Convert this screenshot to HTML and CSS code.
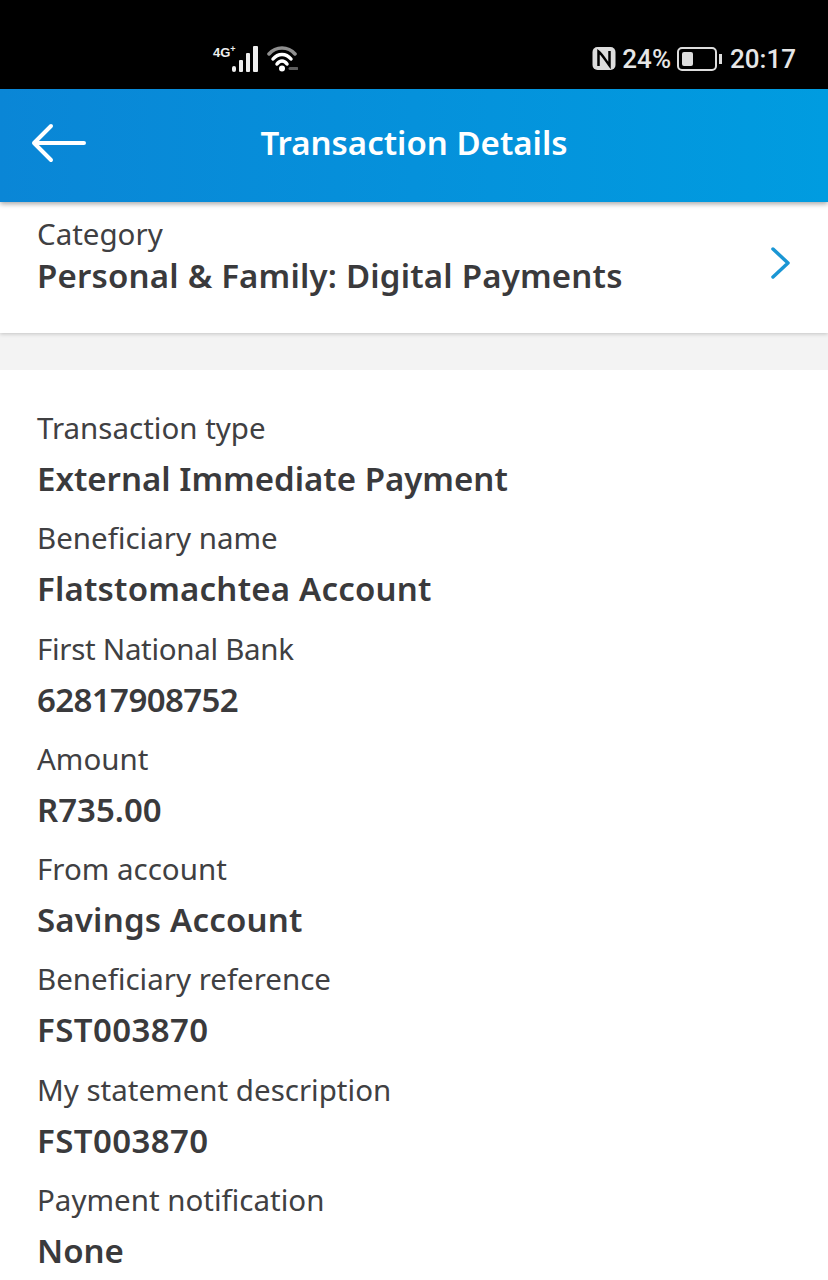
FILE: index.html
```html
<!DOCTYPE html>
<html lang="en">
<head>
<meta charset="utf-8">
<title>Transaction Details</title>
<link rel="stylesheet" href="styles.css">
</head>
<body>
<div class="status">
  <div class="status-left">
    <span class="net">4G<sup>+</sup></span>
    <svg class="signal" width="26" height="26" viewBox="0 0 26 26"><rect x="0" y="20" width="4" height="6" rx="2"/><rect x="7" y="14" width="4" height="12" rx="1"/><rect x="14" y="7" width="4" height="19" rx="1"/><rect x="21" y="0" width="5" height="26" rx="1"/></svg>
    <svg class="wifi" width="31" height="26" viewBox="0 0 31 26" fill="none" stroke-linecap="round"><path d="M2 8C9 0 21 0 28 8" stroke="#8f8f8f" stroke-width="3.500"/><path d="M6 13C11 7 19 7 24 13" stroke="#fff" stroke-width="3.500"/><path d="M10 18C13 14 17 14 20 18" stroke="#fff" stroke-width="3.500"/><circle cx="15" cy="22.500" r="3" fill="#fff"/><path d="M23 22.500h7" stroke="#5c5c5c" stroke-width="3"/></svg>
  </div>
  <div class="status-right">
    <svg class="nfc" width="24" height="23" viewBox="0 0 24 23"><rect x="0.500" y="0" width="23" height="23" rx="5" fill="#ddd"/><path d="M6.500 19V4.500C10 7 14 14 17.500 18.500V4" fill="none" stroke="#000" stroke-width="2.500"/></svg>
    <span class="pct">24%</span>
    <span class="battery"><span class="battery-fill"></span></span>
    <span class="battery-tip"></span>
    <span class="clock">20:17</span>
  </div>
</div>
<header class="appbar">
  <svg class="back" width="56" height="40" viewBox="0 0 56 40" fill="none" stroke="#fff" stroke-width="4" stroke-linecap="round" stroke-linejoin="round"><path d="M20 3L3 20L20 37M3 20H53"/></svg>
  <h1 class="title">Transaction Details</h1>
</header>
<section class="category">
  <div>
    <div class="label">Category</div>
    <div class="value wide">Personal &amp; Family: Digital Payments</div>
  </div>
  <svg class="chev" width="22" height="34" viewBox="0 0 22 34" fill="none" stroke="#1a96d4" stroke-width="3.500" stroke-linecap="round" stroke-linejoin="round"><path d="M3 3L18 17L3 31"/></svg>
</section>
<div class="gap"></div>
<main class="details">
  <div class="row"><div class="label">Transaction type</div><div class="value">External Immediate Payment</div></div>
  <div class="row"><div class="label">Beneficiary name</div><div class="value wide">Flatstomachtea Account</div></div>
  <div class="row"><div class="label tight">First National Bank</div><div class="value digits">62817908752</div></div>
  <div class="row"><div class="label">Amount</div><div class="value">R735.00</div></div>
  <div class="row"><div class="label">From account</div><div class="value wide">Savings Account</div></div>
  <div class="row"><div class="label">Beneficiary reference</div><div class="value ref">FST003870</div></div>
  <div class="row"><div class="label">My statement description</div><div class="value ref">FST003870</div></div>
  <div class="row"><div class="label">Payment notification</div><div class="value">None</div></div>
</main>
</body>
</html>
```
FILE: styles.css
```css
* { box-sizing: border-box; }
html, body { margin: 0; padding: 0; }
body { width: 828px; height: 1280px; overflow: hidden; background: #fff; font-family: "Noto Sans", sans-serif; color: #3a3a3c; }
.status { height: 89px; background: #000; color: #e6e6e6; display: flex; justify-content: space-between; align-items: center; padding: 28px 32px 0 213px; }
.status-left { display: flex; align-items: flex-end; }
.net { width: 19px; font-size: 13px; font-weight: 700; color: #eee; align-self: flex-start; line-height: 14px; white-space: nowrap; font-family: "Liberation Sans", sans-serif; }
.net sup { font-size: 9px; line-height: 0; }
.signal { fill: #eee; }
.wifi { margin-left: 9px; }
.status-right { display: flex; align-items: center; font-size: 26px; font-weight: 500; line-height: 32px; font-family: "Roboto", sans-serif; }
.pct { margin-left: 6px; }
.battery { width: 40px; height: 24px; border: 2px solid #ddd; border-radius: 5px; padding: 3px; display: flex; margin-left: 6px; }
.battery-fill { width: 11px; background: #ddd; border-radius: 2px; }
.battery-tip { width: 3px; height: 10px; background: #ddd; margin-left: 2px; }
.clock { margin-left: 8px; }
.appbar { position: relative; height: 113px; padding-bottom: 6px; background: linear-gradient(90deg, #0a86d6, #009ce0); display: flex; align-items: center; justify-content: center; box-shadow: 0 2px 5px rgba(0,0,0,.35); z-index: 2; }
.back { position: absolute; left: 31px; top: 34px; }
.title { margin: 0; font-size: 33px; font-weight: 600; color: #fff; line-height: 40px; }
.category { height: 131px; background: #fff; display: flex; justify-content: space-between; align-items: center; padding: 0 36px 20px 37px; box-shadow: 0 1px 4px rgba(0,0,0,.2); position: relative; z-index: 1; }
.category .value { margin-top: -3px; }
.chev { position: relative; top: 5px; }
.gap { height: 37px; background: #f3f3f3; }
.details { padding: 38px 37px 0; }
.row { height: 110.300px; }
.label { font-size: 29.500px; line-height: 40px; color: #404042; }
.label.tight { letter-spacing: -0.3px; }
.value { font-size: 33px; font-weight: 600; line-height: 50px; color: #3a3a3c; margin-top: 6px; }
.value.wide { letter-spacing: 0.2px; }
.value.digits { letter-spacing: -0.6px; }
.value.ref { letter-spacing: 0.4px; }
```
